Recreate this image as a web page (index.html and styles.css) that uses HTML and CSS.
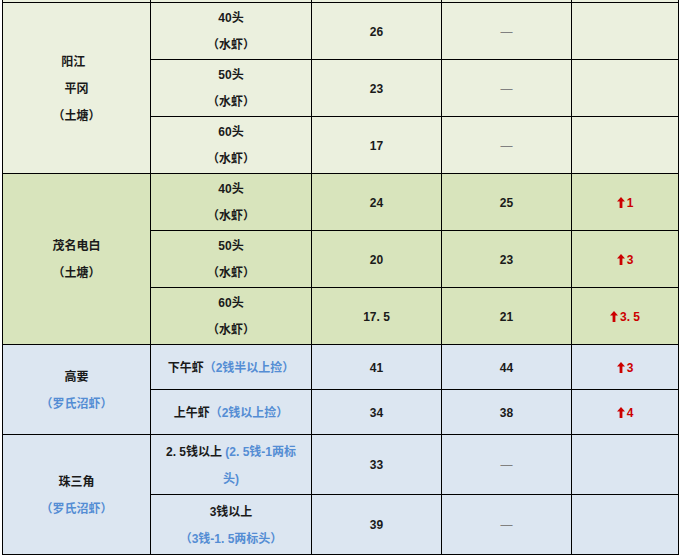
FILE: index.html
```html
<!DOCTYPE html>
<html lang="zh-CN">
<head>
<meta charset="utf-8">
<title>虾价对比</title>
<link rel="stylesheet" href="styles.css">
</head>
<body>
<div class="sheet">
<table class="grid">
  <colgroup>
    <col class="c-region"><col class="c-spec"><col class="c-num"><col class="c-num"><col class="c-diff">
  </colgroup>
  <tbody>
    <tr class="stub"><td></td><td></td><td></td><td></td><td></td></tr>
  </tbody>
  <tbody class="olive">
    <tr class="r57">
      <td rowspan="3">阳江&nbsp;&nbsp;<br>平冈<br>（土塘）</td>
      <td>40头<br>（水虾）</td><td>26</td><td class="dash">—</td><td></td>
    </tr>
    <tr class="r57">
      <td>50头<br>（水虾）</td><td>23</td><td class="dash">—</td><td></td>
    </tr>
    <tr class="r57">
      <td>60头<br>（水虾）</td><td>17</td><td class="dash">—</td><td></td>
    </tr>
  </tbody>
  <tbody class="green">
    <tr class="r57">
      <td rowspan="3">茂名电白<br>（土塘）</td>
      <td>40头<br>（水虾）</td><td>24</td><td>25</td>
      <td class="up"><svg class="arrow" viewBox="0 0 8 11"><path d="M4 0 L8 4.6 H5.4 V11 H2.6 V4.6 H0 Z"/></svg>1</td>
    </tr>
    <tr class="r57">
      <td>50头<br>（水虾）</td><td>20</td><td>23</td>
      <td class="up"><svg class="arrow" viewBox="0 0 8 11"><path d="M4 0 L8 4.6 H5.4 V11 H2.6 V4.6 H0 Z"/></svg>3</td>
    </tr>
    <tr class="r57">
      <td>60头<br>（水虾）</td><td>17. 5</td><td>21</td>
      <td class="up"><svg class="arrow" viewBox="0 0 8 11"><path d="M4 0 L8 4.6 H5.4 V11 H2.6 V4.6 H0 Z"/></svg>3. 5</td>
    </tr>
  </tbody>
  <tbody class="blue">
    <tr class="r45">
      <td rowspan="2">高要<br><span class="note">（罗氏沼虾）</span></td>
      <td>下午虾<span class="note">（2钱半以上捡）</span></td><td>41</td><td>44</td>
      <td class="up"><svg class="arrow" viewBox="0 0 8 11"><path d="M4 0 L8 4.6 H5.4 V11 H2.6 V4.6 H0 Z"/></svg>3</td>
    </tr>
    <tr class="r45">
      <td>上午虾<span class="note">（2钱以上捡）</span></td><td>34</td><td>38</td>
      <td class="up"><svg class="arrow" viewBox="0 0 8 11"><path d="M4 0 L8 4.6 H5.4 V11 H2.6 V4.6 H0 Z"/></svg>4</td>
    </tr>
    <tr class="r60">
      <td rowspan="2">珠三角<br><span class="note">（罗氏沼虾）</span></td>
      <td>2. 5钱以上 <span class="note">(2. 5钱-1两标<br>头)</span></td><td>33</td><td class="dash">—</td><td></td>
    </tr>
    <tr class="r60">
      <td>3钱以上<br><span class="note">（3钱-1. 5两标头）</span></td><td>39</td><td class="dash">—</td><td></td>
    </tr>
  </tbody>
</table>
</div>
</body>
</html>
```

FILE: styles.css
```css
body {
  margin: 0;
  background: #ffffff;
  color: #1a1a1a;
  font-family: "Liberation Sans", "Noto Sans CJK SC", sans-serif;
  font-weight: bold;
  font-size: 12px;
  line-height: 27px;
}

.sheet {
  padding-left: 2px;
}

.grid {
  border-collapse: collapse;
  table-layout: fixed;
  width: 677px;
}

.c-region { width: 148px; }
.c-spec { width: 161px; }
.c-num { width: 130px; }
.c-diff { width: 107px; }

.grid td {
  border: 1px solid #000000;
  text-align: center;
  vertical-align: middle;
  padding: 2px 0 0;
}

.stub td {
  height: 2px;
  padding: 0;
  border-top: none;
  background: #ebf0de;
}

.r57 td { height: 54px; }
.r45 td { height: 42px; }
.r60 td { height: 57px; }

.olive td { background: #ebf0de; }
.green td { background: #d8e4bc; }
.blue td { background: #dce6f1; }

.note { color: #548dd4; }

.dash {
  color: #808080;
  font-weight: normal;
}

.up {
  color: #cc0000;
}

.arrow {
  width: 8px;
  height: 11px;
  fill: #cc0000;
  margin-right: 2px;
  vertical-align: -1px;
}
```
